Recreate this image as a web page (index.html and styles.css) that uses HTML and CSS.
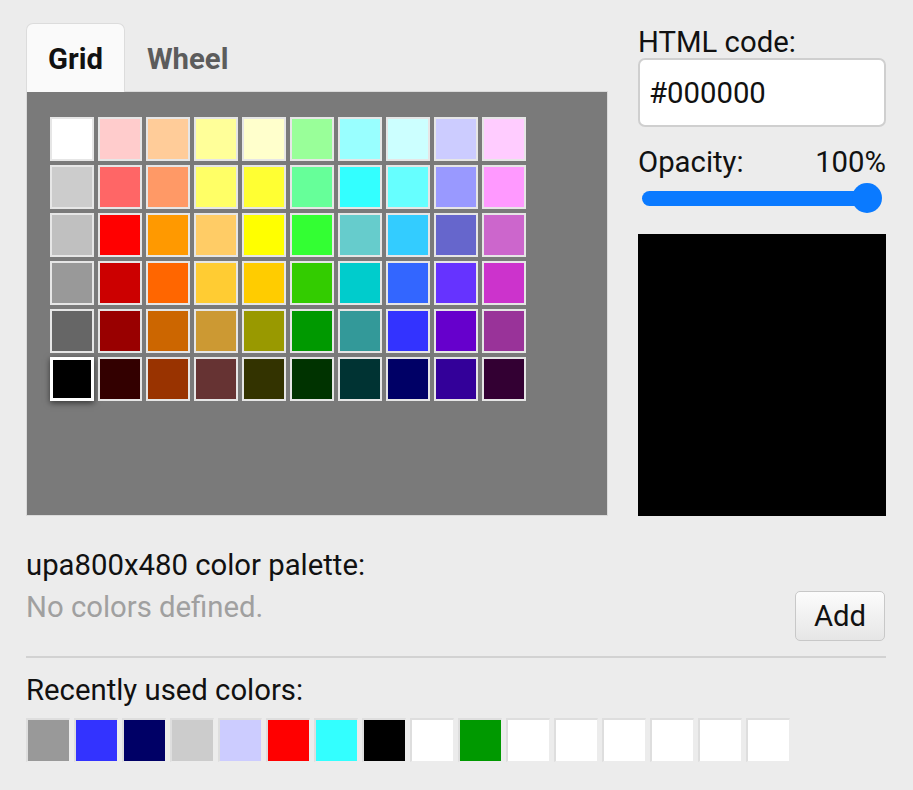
FILE: index.html
```html
<!DOCTYPE html>
<html>
<head>
<meta charset="utf-8">
<link rel="stylesheet" href="styles.css">
</head>
<body>
<div class="app">
  <div class="top">
    <div class="left">
      <div class="tabs">
        <div class="tab active">Grid</div>
        <div class="tab">Wheel</div>
      </div>
      <div class="panel">
        <div class="grid">
          <span class="cell" style="background:#ffffff"></span><span class="cell" style="background:#ffcccc"></span><span class="cell" style="background:#ffcc99"></span><span class="cell" style="background:#ffff99"></span><span class="cell" style="background:#ffffcc"></span><span class="cell" style="background:#99ff99"></span><span class="cell" style="background:#99ffff"></span><span class="cell" style="background:#ccffff"></span><span class="cell" style="background:#ccccff"></span><span class="cell" style="background:#ffccff"></span>
          <span class="cell" style="background:#cccccc"></span><span class="cell" style="background:#ff6666"></span><span class="cell" style="background:#ff9966"></span><span class="cell" style="background:#ffff66"></span><span class="cell" style="background:#ffff33"></span><span class="cell" style="background:#66ff99"></span><span class="cell" style="background:#33ffff"></span><span class="cell" style="background:#66ffff"></span><span class="cell" style="background:#9999ff"></span><span class="cell" style="background:#ff99ff"></span>
          <span class="cell" style="background:#c0c0c0"></span><span class="cell" style="background:#ff0000"></span><span class="cell" style="background:#ff9900"></span><span class="cell" style="background:#ffcc66"></span><span class="cell" style="background:#ffff00"></span><span class="cell" style="background:#33ff33"></span><span class="cell" style="background:#66cccc"></span><span class="cell" style="background:#33ccff"></span><span class="cell" style="background:#6666cc"></span><span class="cell" style="background:#cc66cc"></span>
          <span class="cell" style="background:#999999"></span><span class="cell" style="background:#cc0000"></span><span class="cell" style="background:#ff6600"></span><span class="cell" style="background:#ffcc33"></span><span class="cell" style="background:#ffcc00"></span><span class="cell" style="background:#33cc00"></span><span class="cell" style="background:#00cccc"></span><span class="cell" style="background:#3366ff"></span><span class="cell" style="background:#6633ff"></span><span class="cell" style="background:#cc33cc"></span>
          <span class="cell" style="background:#666666"></span><span class="cell" style="background:#990000"></span><span class="cell" style="background:#cc6600"></span><span class="cell" style="background:#cc9933"></span><span class="cell" style="background:#999900"></span><span class="cell" style="background:#009900"></span><span class="cell" style="background:#339999"></span><span class="cell" style="background:#3333ff"></span><span class="cell" style="background:#6600cc"></span><span class="cell" style="background:#993399"></span>
          <span class="cell selected" style="background:#000000"></span><span class="cell" style="background:#330000"></span><span class="cell" style="background:#993300"></span><span class="cell" style="background:#663333"></span><span class="cell" style="background:#333300"></span><span class="cell" style="background:#003300"></span><span class="cell" style="background:#003333"></span><span class="cell" style="background:#000066"></span><span class="cell" style="background:#330099"></span><span class="cell" style="background:#330033"></span>
        </div>
      </div>
    </div>
    <div class="right">
      <div class="label">HTML code:</div>
      <input class="code" type="text" value="#000000">
      <div class="opacity-row"><span>Opacity:</span><span>100%</span></div>
      <div class="slider">
        <div class="track"></div>
        <div class="thumb"></div>
      </div>
      <div class="preview"></div>
    </div>
  </div>

  <div class="palette-label">upa800x480 color palette:</div>
  <div class="palette-row">
    <div class="empty">No colors defined.</div>
    <button class="add">Add</button>
  </div>
  <div class="divider"></div>
  <div class="recent-label">Recently used colors:</div>
  <div class="recent">
    <span class="swatch" style="background:#999999"></span><span class="swatch" style="background:#3333ff"></span><span class="swatch" style="background:#000066"></span><span class="swatch" style="background:#cccccc"></span><span class="swatch" style="background:#ccccff"></span><span class="swatch" style="background:#ff0000"></span><span class="swatch" style="background:#33ffff"></span><span class="swatch" style="background:#000000"></span><span class="swatch" style="background:#ffffff"></span><span class="swatch" style="background:#009900"></span><span class="swatch" style="background:#ffffff"></span><span class="swatch" style="background:#ffffff"></span><span class="swatch" style="background:#ffffff"></span><span class="swatch" style="background:#ffffff"></span><span class="swatch" style="background:#ffffff"></span><span class="swatch" style="background:#ffffff"></span>
  </div>
</div>
</body>
</html>
```

FILE: styles.css
```css
* { box-sizing: border-box; }
html, body {
  margin: 0;
  padding: 0;
  background: #ececec;
}
body {
  font-family: Roboto, "Liberation Sans", sans-serif;
  font-size: 29.3px;
  line-height: 33px;
  color: #111;
}
.app {
  width: 913px;
  height: 790px;
  padding: 23px 27px 0 26px;
}
.top {
  display: flex;
  gap: 30px;
  align-items: stretch;
}
.left {
  width: 582px;
  display: flex;
  flex-direction: column;
}
.tabs {
  display: flex;
  height: 69px;
  margin-bottom: -1px;
  position: relative;
  z-index: 1;
}
.tab {
  height: 69px;
  padding: 2px 21px 0 21px;
  display: flex;
  align-items: center;
  font-weight: bold;
  color: #5c5c5c;
  border: 1px solid transparent;
  border-bottom: none;
  border-radius: 7px 7px 0 0;
}
.tab.active {
  background: #fafafa;
  border-color: #dcdcdc;
  color: #111;
}
.panel {
  height: 425px;
  background: #7a7a7a;
  border: 1px solid #dadada;
  padding: 25px 0 0 23px;
}
.grid {
  display: grid;
  grid-template-columns: repeat(10, 44px);
  grid-auto-rows: 44px;
  gap: 4px;
}
.cell {
  display: block;
  width: 44px;
  height: 44px;
  border: 2px solid #e6e6e6;
}
.cell.selected {
  border: 3px solid #fff;
  box-shadow: 0 2px 6px rgba(0, 0, 0, 0.55);
}
.right {
  width: 248px;
  display: flex;
  flex-direction: column;
  padding-top: 3px;
}
.label {
  line-height: 32px;
}
.code {
  display: block;
  width: 248px;
  height: 69px;
  margin: 0;
  border: 2px solid #cfcfcf;
  border-radius: 7px;
  background: #fff;
  padding: 0 9px;
  font-family: Roboto, "Liberation Sans", sans-serif;
  font-size: 29.3px;
  color: #111;
  outline: none;
}
.opacity-row {
  display: flex;
  justify-content: space-between;
  line-height: 32px;
  margin-top: 19px;
}
.slider {
  position: relative;
  height: 31px;
  margin: 5px 4px 0 4px;
  width: 240px;
}
.track {
  position: absolute;
  left: 0;
  right: 14px;
  top: 8px;
  height: 15px;
  border-radius: 8px;
  background: #0a7aff;
}
.thumb {
  position: absolute;
  right: 0;
  top: 0;
  width: 30px;
  height: 30px;
  border-radius: 50%;
  background: #0a7aff;
}
.preview {
  flex: 1;
  margin-top: 20px;
  background: #000;
}
.palette-label {
  margin-top: 33px;
}
.palette-row {
  display: flex;
  justify-content: space-between;
  align-items: flex-start;
  margin-top: 9px;
}
.empty {
  color: #a0a0a0;
}
.add {
  width: 90px;
  height: 50px;
  margin: 0 1px 0 0;
  padding: 0;
  border: 1px solid #c8c8c8;
  border-radius: 5px;
  background: linear-gradient(#fcfcfc, #e6e6e6);
  font-family: Roboto, "Liberation Sans", sans-serif;
  font-size: 29.3px;
  color: #111;
}
.divider {
  height: 2px;
  background: #d2d2d2;
  margin-top: 15px;
}
.recent-label {
  margin-top: 16px;
}
.recent {
  display: flex;
  gap: 4px;
  margin-top: 11px;
}
.swatch {
  display: block;
  width: 44px;
  height: 44px;
  border-style: solid;
  border-width: 2px 1px 1px 2px;
  border-color: #dedede #ececec #ececec #dedede;
}
```
